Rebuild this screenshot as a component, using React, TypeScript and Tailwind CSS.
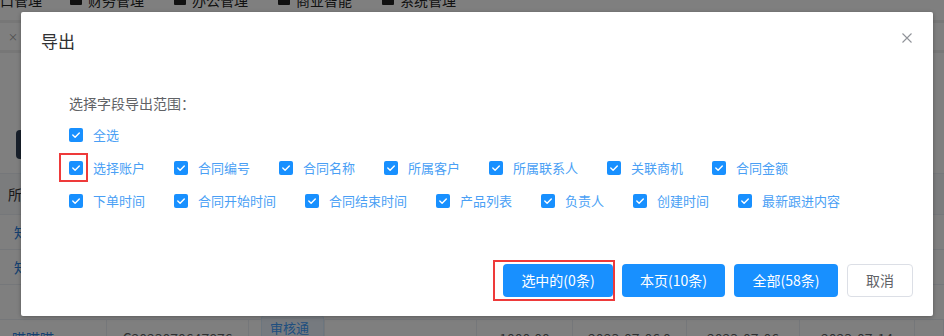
import React from 'react';

const FONT = '"Noto Sans CJK SC", "Noto Sans", "Liberation Sans", sans-serif';

const navItems = ['财务管理', '办公管理', '商业智能', '系统管理'];

const fieldRows: string[][] = [
  ['全选'],
  ['选择账户', '合同编号', '合同名称', '所属客户', '所属联系人', '关联商机', '合同金额'],
  ['下单时间', '合同开始时间', '合同结束时间', '产品列表', '负责人', '创建时间', '最新跟进内容'],
];

const colWidths = [107, 142, 76, 152, 96, 114, 113, 115, 29];

const CheckBox = ({ marked }: { marked?: boolean }) => (
  <span className="relative inline-flex w-[14px] h-[14px] shrink-0 items-center justify-center rounded-[2px] bg-[#1890ff]">
    <svg width="14" height="14" viewBox="0 0 14 14" fill="none">
      <path d="M3.8 7.1 L6.1 9.3 L10.3 4.9" stroke="white" strokeWidth="1.4" strokeLinecap="round" strokeLinejoin="round" />
    </svg>
    {marked && (
      <span className="absolute left-[-10px] top-[-8px] w-[29px] h-[29px] border-2 border-[#ee3a3a]" />
    )}
  </span>
);

const BgTable = () => (
  <div className="mt-[14px]">
    {/* header */}
    <div className="flex h-[42px] bg-[#f7f8fa] border-y border-[#ebeef5] text-[14px] text-[#333]">
      <div className="w-[107px] pl-[8px] flex items-center">所属客户</div>
    </div>
    {['知晓科技', '知晓科技', ''].map((t, i) => (
      <div key={i} className="flex h-[35px] border-b border-[#ebeef5] text-[14px]">
        <div className="w-[107px] pl-[14px] flex items-center text-[#2a7fe0]">{t}</div>
      </div>
    ))}
    <div className="flex h-[35px] border-b border-[#ebeef5] text-[14px] text-[#606266]">
      {colWidths.map((w, i) => (
        <div
          key={i}
          style={{ width: w }}
          className="shrink-0 border-r border-[#ebeef5] flex items-center justify-center pt-[3px]"
        >
          {i === 0 && <span className="w-full pl-[12px] text-[#2a7fe0]">嗒嗒嗒</span>}
          {i === 1 && 'C2023070647876'}
          {i === 2 && (
            <span className="w-full pl-[12px]">
              <span className="inline-block px-[8px] h-[24px] leading-[24px] rounded-[3px] bg-[#ecf5ff] border border-[#d9ecff] text-[#409eff] text-[13px]">审核通过</span>
            </span>
          )}
          {i === 4 && '1000.00'}
          {i === 5 && '2023-07-06 0'}
          {i === 6 && '2023-07-06'}
          {i === 7 && '2023-07-14'}
        </div>
      ))}
    </div>
  </div>
);

export default function App() {
  return (
    <div className="relative w-[944px] h-[336px] overflow-hidden bg-white" style={{ fontFamily: FONT }}>
      {/* background page */}
      <div className="h-[20px] overflow-hidden">
        <div className="-mt-[9px] flex items-center h-[18px] text-[14px] text-[#222] -ml-[14px]">
          <span className="mr-[28px]">户口管理</span>
          {navItems.map((n) => (
            <span key={n} className="flex items-center mr-[30px]">
              <span className="w-[12px] h-[10px] bg-[#222] rounded-[1px] mr-[6px]" />
              {n}
            </span>
          ))}
        </div>
      </div>
      <div className="h-[33px] border-y-[3px] border-[#eee] flex items-center pl-[8px] text-[10px] text-[#999]">×</div>
      <div className="pl-[16px] mt-[77px]">
        <div className="h-[29px] w-[80px] rounded-[4px] bg-[#304156]" />
      </div>
      <BgTable />

      {/* overlay */}
      <div className="absolute inset-0 bg-black/50 pl-[21px] pt-[12px]">
        <div className="w-[912px] h-[304px] bg-white rounded-[2px] shadow-[0_1px_4px_rgba(0,0,0,0.3)] flex flex-col">
          <div className="flex justify-between items-start pl-[20px] pr-[21px] pt-[17px]">
            <span className="text-[17px] leading-[24px] text-[#303133]">导出</span>
            <svg width="10" height="10" viewBox="0 0 10 10" className="mt-[4px]">
              <path d="M0.5 0.5 L9.5 9.5 M9.5 0.5 L0.5 9.5" stroke="#909399" strokeWidth="1.1" />
            </svg>
          </div>

          <div className="pl-[48px] mt-[40px]">
            <div className="h-[20px] leading-[20px] text-[14px] text-[#606266]">选择字段导出范围：</div>
            <div className="mt-[12px] flex flex-col gap-[13px]">
              {fieldRows.map((row, ri) => (
                <div key={ri} className="flex items-center h-[20px]">
                  {row.map((f) => (
                    <label key={f} className="flex items-center mr-[29px] text-[13px] text-[#4a9ff5]">
                      <CheckBox marked={f === '选择账户'} />
                      <span className="ml-[10px] leading-[20px]">{f}</span>
                    </label>
                  ))}
                </div>
              ))}
            </div>
          </div>

          <div className="mt-[53px] pr-[20px] flex justify-end gap-[9px] text-[14px]">
            <div className="relative">
              <button className="w-[110px] h-[33px] rounded-[4px] bg-[#1890ff] text-white">选中的(0条)</button>
              <span className="absolute left-[-10px] top-[-4px] w-[122px] h-[41px] border-2 border-[#ee3a3a]" />
            </div>
            <button className="w-[103px] h-[33px] rounded-[4px] bg-[#1890ff] text-white">本页(10条)</button>
            <button className="w-[104px] h-[33px] rounded-[4px] bg-[#1890ff] text-white">全部(58条)</button>
            <button className="w-[66px] h-[33px] rounded-[4px] bg-white border border-[#dcdfe6] text-[#606266]">取消</button>
          </div>
        </div>
      </div>
    </div>
  );
}
